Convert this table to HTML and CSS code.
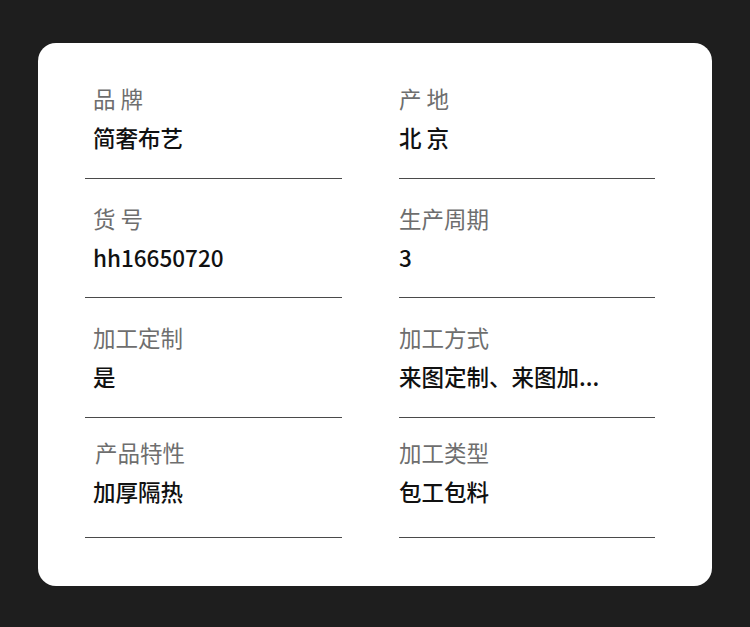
FILE: index.html
```html
<!DOCTYPE html>
<html lang="zh">
<head>
<meta charset="utf-8">
<link rel="stylesheet" href="styles.css">
</head>
<body>
<div class="card">
  <div class="grid">
    <div class="cell left"><div class="label">品 牌</div><div class="value">简奢布艺</div></div>
    <div class="cell"><div class="label">产 地</div><div class="value">北 京</div></div>
    <div class="cell left"><div class="label">货 号</div><div class="value">hh16650720</div></div>
    <div class="cell"><div class="label">生产周期</div><div class="value">3</div></div>
    <div class="cell left"><div class="label">加工定制</div><div class="value">是</div></div>
    <div class="cell"><div class="label">加工方式</div><div class="value">来图定制、来图加...</div></div>
    <div class="cell left last"><div class="label">产品特性</div><div class="value">加厚隔热</div></div>
    <div class="cell last"><div class="label">加工类型</div><div class="value">包工包料</div></div>
  </div>
</div>
</body>
</html>
```
FILE: styles.css
```css
html, body {
  margin: 0;
  padding: 0;
  background: #1e1e1e;
}
body {
  width: 750px;
  height: 627px;
  padding-top: 43px;
  box-sizing: border-box;
  font-family: "Noto Sans CJK SC", "Noto Sans", sans-serif;
}
.card {
  margin-left: 38px;
  width: 674px;
  height: 543px;
  box-sizing: border-box;
  background: #ffffff;
  border-radius: 18px;
  padding: 37px 57px 0 47px;
}
.grid {
  display: grid;
  grid-template-columns: 257px 256px;
  column-gap: 57px;
  row-gap: 21px;
}
.cell {
  padding-bottom: 20.5px;
  border-bottom: 1px solid #4a4a4a;
}
.cell.left {
  padding-left: 8px;
}
.label {
  margin-top: -1px;
  font-size: 22.5px;
  line-height: 39px;
  height: 39px;
  color: #6e6e6e;
  white-space: nowrap;
}
.value {
  font-size: 22.5px;
  line-height: 39px;
  height: 39px;
  color: #111111;
  font-weight: 500;
  white-space: nowrap;
}
.cell.last {
  padding-bottom: 26.5px;
}
.cell.last .label {
  margin-top: -6px;
}
.cell.left.last .label {
  padding-left: 2px;
}
```
